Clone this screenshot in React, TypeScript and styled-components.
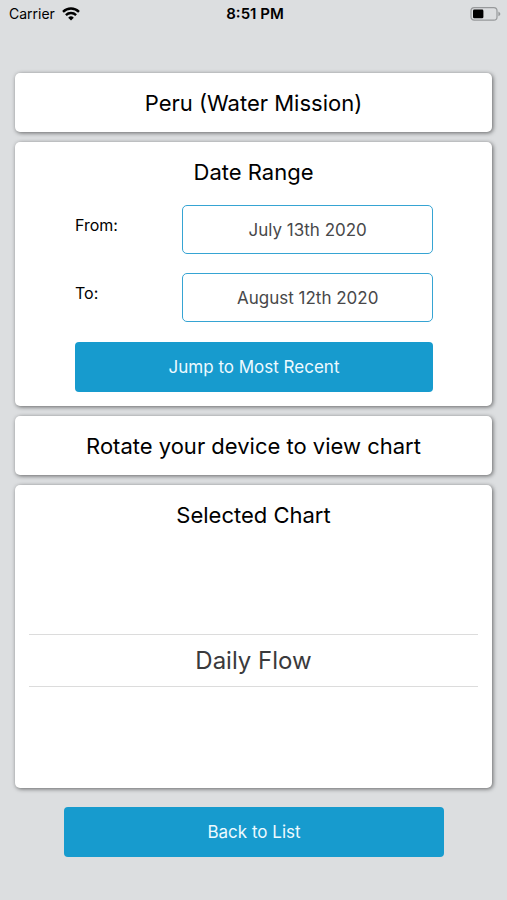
import React from "react";
import styled, { createGlobalStyle } from "styled-components";

const GlobalStyle = createGlobalStyle`
  * { box-sizing: border-box; }
  body {
    margin: 0;
    background: #dcdee0;
    color: #000;
    font-family: Inter, "Liberation Sans", sans-serif;
  }
  button, select { font-family: inherit; }
`;

const Screen = styled.div`
  min-height: 100vh;
  display: flex;
  flex-direction: column;
  background: #dcdee0;
`;

const StatusBar = styled.header`
  display: grid;
  grid-template-columns: 1fr auto 1fr;
  align-items: center;
  height: 28px;
  padding: 0 6px 0 9px;
  font-size: 14px;
  line-height: 20px;
`;

const Carrier = styled.div`
  display: flex;
  align-items: center;
  gap: 7px;
`;

const Clock = styled.time`
  font-size: 15px;
  font-weight: 600;
`;

const Battery = styled.div`
  display: flex;
  justify-content: flex-end;
`;

const Content = styled.main`
  display: flex;
  flex-direction: column;
  gap: 10px;
  padding: 45px 15px 0;
`;

const Card = styled.section`
  padding: 15px 14px 13px;
  background: #fff;
  border-radius: 5px;
  box-shadow: 1px 1px 4px rgba(0, 0, 0, 0.55);
`;

const Title = styled.h2`
  margin: 0;
  font-size: 22px;
  line-height: 31px;
  font-weight: 400;
  text-align: center;
`;

const DateForm = styled.div`
  display: flex;
  flex-direction: column;
  gap: 20px;
  padding: 17px 45px 1px 46px;
`;

const DateRows = styled.div`
  display: flex;
  flex-direction: column;
  gap: 19px;
`;

const DateRow = styled.div`
  display: grid;
  grid-template-columns: 3fr 7fr;
`;

const DateLabel = styled.label`
  padding-top: 10px;
  font-size: 16px;
  line-height: 20px;
`;

const DateButton = styled.button`
  height: 49px;
  border: 1px solid #36a4d3;
  border-radius: 5px;
  background: #fff;
  color: #48484a;
  font-size: 17px;
`;

const ActionButton = styled.button`
  height: 50px;
  border: 0;
  border-radius: 4px;
  background: #179bce;
  color: #eefaff;
  font-size: 17px;
`;

const Picker = styled.div`
  padding: 103px 0 88px;
`;

const PickerSelect = styled.select`
  display: block;
  width: 100%;
  height: 53px;
  appearance: none;
  border: solid #dcdcdc;
  border-width: 1px 0;
  border-radius: 0;
  background: transparent;
  color: #3a3a3c;
  font-size: 24px;
  text-align: center;
  text-align-last: center;
`;

const Footer = styled.footer`
  display: flex;
  flex-direction: column;
  padding: 19px 63px 43px 64px;
`;

const WifiIcon = () => (
  <svg width="18" height="14" viewBox="0 0 18 14" aria-hidden="true">
    <g fill="none" stroke="#000" strokeWidth="2.4">
      <path d="M1 4.8a11.5 11.5 0 0 1 16 0" />
      <path d="M3.9 8.1a7.4 7.4 0 0 1 10.2 0" />
    </g>
    <path d="M6.2 10.7a4 4 0 0 1 5.6 0L9 13.5z" />
  </svg>
);

const BatteryIcon = () => (
  <svg width="31" height="14" viewBox="0 0 31 14" aria-hidden="true">
    <rect x="1" y="0.6" width="26" height="12.6" rx="3.2" fill="none" stroke="#97999b" strokeWidth="1.2" />
    <rect x="3" y="2.6" width="10.4" height="8.6" rx="1.3" />
    <path d="M28.4 4.5q4 2.4 0 4.8z" fill="#97999b" />
  </svg>
);

export default function App() {
  return (
    <Screen>
      <GlobalStyle />
      <StatusBar>
        <Carrier>Carrier <WifiIcon /></Carrier>
        <Clock>8:51 PM</Clock>
        <Battery><BatteryIcon /></Battery>
      </StatusBar>
      <Content>
        <Card><Title as="h1">Peru (Water Mission)</Title></Card>
        <Card>
          <Title>Date Range</Title>
          <DateForm>
            <DateRows>
              <DateRow>
                <DateLabel htmlFor="from-date">From:</DateLabel>
                <DateButton id="from-date" type="button">July 13th 2020</DateButton>
              </DateRow>
              <DateRow>
                <DateLabel htmlFor="to-date">To:</DateLabel>
                <DateButton id="to-date" type="button">August 12th 2020</DateButton>
              </DateRow>
            </DateRows>
            <ActionButton type="button">Jump to Most Recent</ActionButton>
          </DateForm>
        </Card>
        <Card><Title>Rotate your device to view chart</Title></Card>
        <Card>
          <Title id="chart-title">Selected Chart</Title>
          <Picker>
            <PickerSelect aria-labelledby="chart-title" defaultValue="daily-flow">
              <option value="daily-flow">Daily Flow</option>
            </PickerSelect>
          </Picker>
        </Card>
      </Content>
      <Footer>
        <ActionButton type="button">Back to List</ActionButton>
      </Footer>
    </Screen>
  );
}
